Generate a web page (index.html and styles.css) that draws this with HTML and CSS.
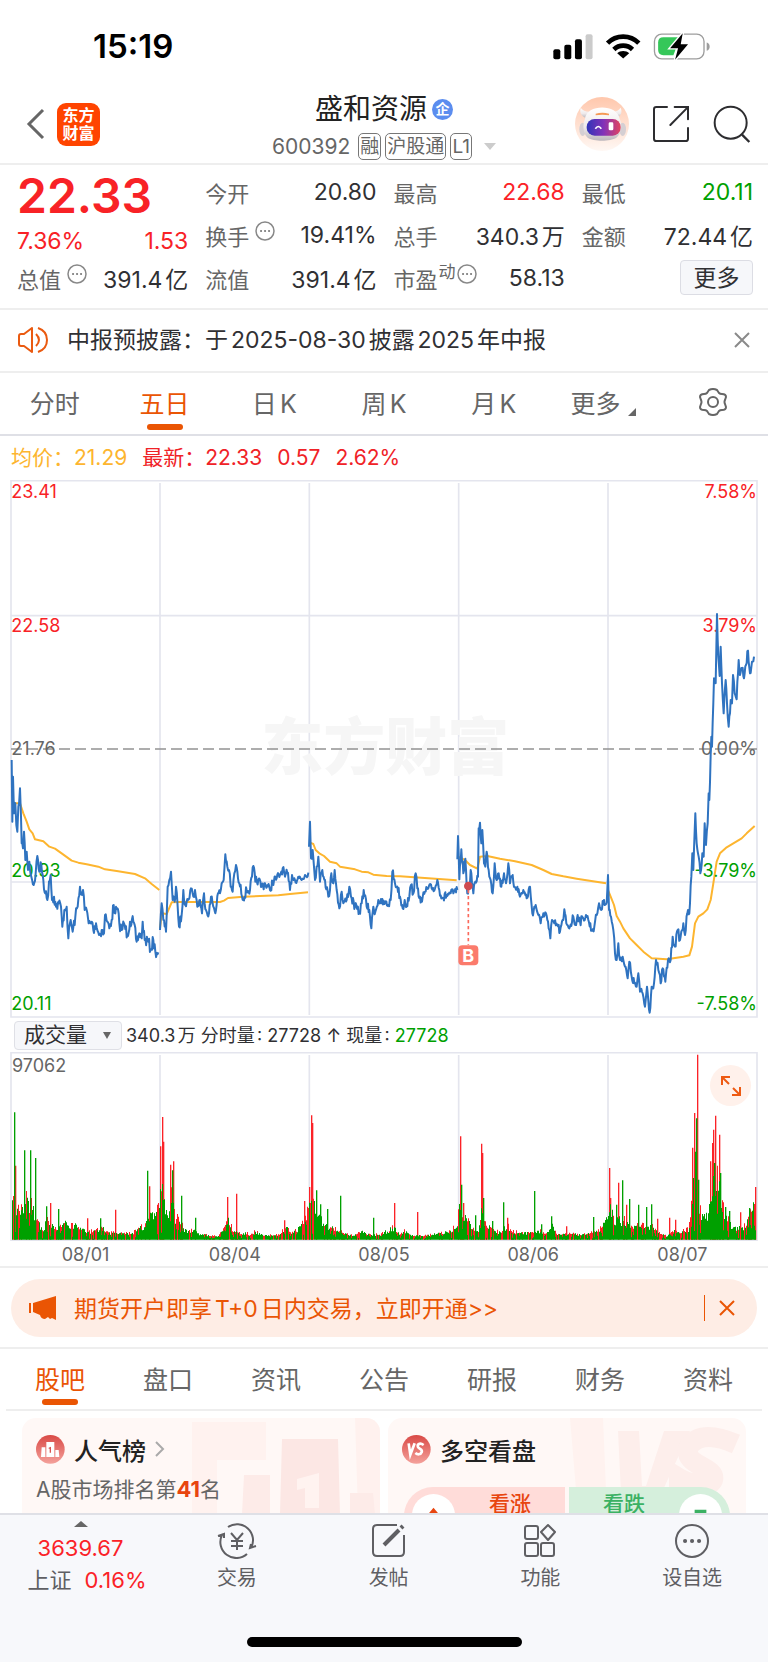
FILE: index.html
```html
<!DOCTYPE html>
<html lang="zh-CN">
<head>
<meta charset="utf-8">
<meta name="viewport" content="width=device-width, initial-scale=1">
<title>盛和资源 600392</title>
<link rel="stylesheet" href="styles.css">
</head>
<body>
<div class="app">
  <div class="status">
    <span class="status-time">15:19</span>
    <svg class="status-icons" viewBox="38 36 472 80" aria-hidden="true">
      <rect x="39" y="84" width="21" height="30" rx="6"/>
      <rect x="72" y="71" width="21" height="43" rx="6"/>
      <rect x="104" y="54" width="21" height="60" rx="6"/>
      <rect x="136" y="39" width="21" height="75" rx="6" fill="#cbcbcb"/>
      <path d="M202 66a66 66 0 0 1 94 0M221 85a40 40 0 0 1 56 0" fill="none" stroke="#000" stroke-width="14"/>
      <path d="M249 112l-18-16c9-9 27-9 36 0z"/>
      <rect x="343" y="39" width="149" height="74" rx="22" fill="#fff" stroke="#9d9d9d" stroke-width="4"/>
      <path d="M500 64c12 3 12 22 0 25z" fill="#9d9d9d"/>
      <path d="M370 48h50l-20 54h-30q-16 0-16-16V64q0-16 16-16z" fill="#35c759"/>
      <path d="M428 36l-38 45h24l-9 35 39-47h-22z" stroke="#fff" stroke-width="8" paint-order="stroke"/>
    </svg>
  </div>

  <header class="header">
    <div class="header-side">
      <button class="icon-btn" aria-label="返回"><svg width="20" height="32" viewBox="0 0 20 32"><path d="M18 2 4 16l14 14" fill="none" stroke="#666" stroke-width="3"/></svg></button>
      <a class="logo" href="#"><span>东方</span><span>财富</span></a>
    </div>
    <div class="header-mid">
      <h1 class="title">盛和资源<span class="badge">企</span></h1>
      <div class="code"><span class="code-num">600392</span><span class="tag">融</span><span class="tag">沪股通</span><span class="tag">L1</span><i class="caret"></i></div>
    </div>
    <div class="header-side header-right">
      <button class="icon-btn" aria-label="智能助手">
        <svg width="54" height="54" viewBox="0 0 162 162">
          <defs>
            <linearGradient id="halo" x2="0" y2="1"><stop stop-color="#ffc7ac"/><stop offset="1" stop-color="#fff8f4"/></linearGradient>
            <linearGradient id="visor"><stop stop-color="#3034b8"/><stop offset=".5" stop-color="#8332b8"/><stop offset="1" stop-color="#e24460"/></linearGradient>
            <linearGradient id="shell" x2="0" y2="1"><stop stop-color="#fff"/><stop offset=".6" stop-color="#eee9ea"/><stop offset="1" stop-color="#bdb8bd"/></linearGradient>
          </defs>
          <circle cx="81" cy="81" r="81" fill="url(#halo)"/>
          <path d="M17 32c-4 14 2 24 14 30l12-18c-12 0-20-4-26-12zM137 32c6 14 0 24-10 30l-14-18c12 0 18-4 24-12z" fill="url(#shell)"/>
          <ellipse cx="23" cy="97" rx="10" ry="20" fill="#d5cfd3"/><ellipse cx="143" cy="97" rx="10" ry="20" fill="#d5cfd3"/>
          <path d="M30 66c4-46 98-46 104 0 8 14 6 46-10 56-18 12-68 12-86 0-14-10-16-40-8-56z" fill="url(#shell)"/>
          <path d="M62 50q20-6 40 0v5q-20-4-40 0z" fill="#f59a57"/>
          <rect x="35" y="66" width="102" height="50" rx="24" fill="url(#visor)"/>
          <path d="M61 95q9-13 18 0" fill="none" stroke="#fff" stroke-width="5"/><rect x="101" y="76" width="14" height="24" rx="4" fill="#fff"/>
        </svg>
      </button>
      <button class="icon-btn" aria-label="分享"><svg width="38" height="38" viewBox="0 0 114 114"><path d="M45 6H13q-7 0-7 7v88q0 7 7 7h88q7 0 7-7V69M68 6h40v37M107 7 55 60" fill="none" stroke="#2d2d30" stroke-width="6" stroke-linecap="round"/></svg></button>
      <button class="icon-btn" aria-label="搜索"><svg width="38" height="38" viewBox="0 0 114 114"><circle cx="53" cy="53" r="48" fill="none" stroke="#2d2d30" stroke-width="6"/><path d="m87 89 22 22" stroke="#2d2d30" stroke-width="7"/></svg></button>
    </div>
  </header>

  <main class="main">
    <section class="quote">
      <div class="col">
        <strong class="price">22.33</strong>
        <div class="change"><span>7.36%</span><span>1.53</span></div>
        <div class="cell"><span class="label">总值<svg class="dots" viewBox="0 0 20 20"><use href="#dots"/></svg></span><span>391.4亿</span></div>
      </div>
      <div class="col">
        <div class="cell"><span class="label">今开</span><span>20.80</span></div>
        <div class="cell"><span class="label">换手<svg class="dots" viewBox="0 0 20 20"><use href="#dots"/></svg></span><span>19.41%</span></div>
        <div class="cell"><span class="label">流值</span><span>391.4亿</span></div>
      </div>
      <div class="col">
        <div class="cell"><span class="label">最高</span><span class="up">22.68</span></div>
        <div class="cell"><span class="label">总手</span><span>340.3万</span></div>
        <div class="cell"><span class="label">市盈<small class="sup">动</small><svg class="dots dots-tight" viewBox="0 0 20 20"><use href="#dots"/></svg></span><span>58.13</span></div>
      </div>
      <div class="col">
        <div class="cell"><span class="label">最低</span><span class="down">20.11</span></div>
        <div class="cell"><span class="label">金额</span><span>72.44亿</span></div>
        <div class="cell cell-end"><button class="more">更多</button></div>
      </div>
    </section>

    <section class="notice">
      <svg width="31" height="26" viewBox="0 0 31 26" fill="none" stroke="#ea5a10" stroke-width="2"><path d="M6 7 14 1v24l-8-6H3q-2 0-2-2V9q0-2 2-2zM18 7q6 6 0 12M20 1q9 3 9 12t-9 12" stroke-linejoin="round"/></svg>
      <span class="notice-text">中报预披露：于2025-08-30披露2025年中报</span>
      <button class="icon-btn" aria-label="关闭"><svg width="16" height="16" viewBox="0 0 16 16"><path d="m1 1 14 14M15 1 1 15" stroke="#8a8a8a" stroke-width="2"/></svg></button>
    </section>

    <nav class="tabs">
      <button class="tab">分时</button>
      <button class="tab active">五日</button>
      <button class="tab">日K</button>
      <button class="tab">周K</button>
      <button class="tab">月K</button>
      <button class="tab">更多<i class="corner"></i></button>
      <button class="tab" aria-label="设置"><svg width="30" height="28" viewBox="0 0 30 28" fill="none" stroke="#666" stroke-width="2"><path d="M11 2q4-2 8 0l2 3q1 1 3 1 4 0 4 3l-1 3q-1 2 0 4l1 3q0 3-4 3-2 0-3 1l-2 3q-4 2-8 0l-2-3q-1-1-3-1-4 0-4-3l1-3q1-2 0-4L2 9q0-3 4-3 2 0 3-1z" stroke-linejoin="round"/><circle cx="15" cy="14" r="5"/></svg></button>
    </nav>

    <div class="legend"><span class="avg">均价：21.29</span><span>最新：22.33</span><span>0.57</span><span>2.62%</span></div>

    <svg class="chart" viewBox="0 0 2304 1614" role="img" aria-label="五日价格走势">
      <g class="grid">
        <path d="M33 2H2271V1611H33zM480 9V1605M928 9V1605M1376 9V1605M1824 9V1605M33 407H2271M33 1206H2271"/>
      </g>
      <text class="watermark" x="1156" y="820">东方财富</text>
      <path class="mid" d="M33 807H2271"/>
      <path class="avg-line" id="avg"/>
      <g class="axis">
        <text class="t-up" x="34" y="53">23.41</text><text class="t-up" x="34" y="457">22.58</text>
        <text x="34" y="824">21.76</text><text class="t-down" x="34" y="1190">20.93</text><text class="t-down" x="34" y="1590">20.11</text>
        <g text-anchor="end"><text class="t-up" x="2271" y="53">7.58%</text><text class="t-up" x="2271" y="457">3.79%</text>
        <text x="2271" y="824">0.00%</text><text class="t-down" x="2271" y="1190">-3.79%</text><text class="t-down" x="2271" y="1590">-7.58%</text></g>
      </g>
      <path class="price-line" id="price"/>
      <path class="buy-line" d="M1405 1230V1394"/>
      <circle cx="1405" cy="1218" r="13" fill="#cf4b50"/>
      <rect x="1375" y="1396" width="60" height="60" rx="12" fill="#fb7b6c"/>
      <text class="buy" x="1405" y="1446">B</text>
    </svg>

    <div class="vol-head">
      <span class="picker"><select aria-label="指标"><option>成交量</option></select></span>
      <span class="vol-text">340.3万 分时量: 27728 ↑ 现量: <span class="down">27728</span></span>
    </div>

    <div class="vol-wrap">
      <svg class="chart" viewBox="0 125 2304 567" role="img" aria-label="成交量">
        <g class="grid"><path d="M33 127H2271V690H33zM480 134V690M928 134V690M1376 134V690M1824 134V690"/></g>
        <g class="axis"><text x="36" y="186">97062</text></g>
        <path id="volRed" fill="#fb2227"/><path id="volGreen" fill="#00a000"/>
      </svg>
      <button class="expand" aria-label="全屏"><svg width="22" height="22" viewBox="0 0 22 22" fill="none" stroke="#ee5a12" stroke-width="2"><path d="M2 10V2h8M2 2l7 7M20 12v8h-8M20 20l-7-7"/></svg></button>
      <div class="dates"><span>08/01</span><span>08/04</span><span>08/05</span><span>08/06</span><span>08/07</span></div>
    </div>

    <div class="promo-row">
      <div class="promo">
        <svg width="28" height="24" viewBox="0 0 28 24" fill="#ea5504"><path d="M0 7h2v10H0zM4 7 27 0v24l-4-2-2 1-2-2-3 2q-4 0-5-4l-7-3z"/></svg>
        <a href="#">期货开户即享T+0日内交易，立即开通&gt;&gt;</a>
        <button class="icon-btn" aria-label="关闭"><svg width="16" height="16" viewBox="0 0 16 16"><path d="m1 1 14 14M15 1 1 15" stroke="#ea5504" stroke-width="2"/></svg></button>
      </div>
    </div>

    <nav class="tabs tabs-info">
      <button class="tab active">股吧</button><button class="tab">盘口</button><button class="tab">资讯</button><button class="tab">公告</button><button class="tab">研报</button><button class="tab">财务</button><button class="tab">资料</button>
    </nav>

    <section class="cards">
      <article class="card">
        <svg class="card-art" viewBox="0 0 190 96"><path d="M2 4h74v38H27v54H2z" fill="#fff2ef"/><path d="M165 0h25v96h-22z" fill="#fff1ee"/><path d="M54 57h26v39H52z" fill="#fdebe8"/><path d="M92 21h56l2 75H90z" fill="#fce7e4"/><path d="M160 75h23l2 21h-25z" fill="#fdebe8"/><path d="m107 61 22-6v35h-14V70l-8 2z" fill="#fff3f0"/></svg>
        <h2 class="card-title"><svg width="29" height="29" viewBox="0 0 87 87"><defs><linearGradient id="red" x2="0" y2="1"><stop stop-color="#d94a46"/><stop offset="1" stop-color="#f4a19b"/></linearGradient></defs><circle cx="43" cy="43" r="43" fill="url(#red)"/><path d="M17 37h11v29H15zM31 21h24v45H31zM58 45h10l2 21H58z" fill="#fff"/><path d="m38 38 7-3v18h-4V41h-3z" fill="#d95450"/></svg>人气榜<svg width="10" height="16" viewBox="0 0 10 16"><path d="m1 1 7 7-7 7" fill="none" stroke="#aaa" stroke-width="2"/></svg></h2>
        <p class="rank">A股市场排名第<b>41</b>名</p>
      </article>
      <article class="card">
        <svg class="card-art" viewBox="0 0 190 96"><path d="M14 0h33l4 96H22z" fill="#fff2ef"/><path d="M62 13h21l3 55h4l18-55h26l-38 83H66z" fill="#fdeeeb"/><path d="M180 26q-34-15-47 2c-8 20 28 20 24 34-3 8-24 4-34-2v28" fill="none" stroke="#fdeeeb" stroke-width="20"/></svg>
        <h2 class="card-title"><svg width="29" height="29" viewBox="0 0 87 87"><circle cx="43" cy="43" r="43" fill="url(#red)"/><path d="M20 25l5 34 13-34M65 30c-12-8-20-2-17 6 3 7 15 6 11 16-3 8-13 7-19 2" fill="none" stroke="#fff" stroke-width="8"/></svg>多空看盘</h2>
        <div class="vote">
          <button class="vote-up"><svg class="vote-dot" viewBox="0 0 44 44"><circle cx="22" cy="22" r="22" fill="#fff"/><path d="m22 14 10 12H12z" fill="#e8450f"/></svg>看涨</button>
          <button class="vote-down">看跌<svg class="vote-dot" viewBox="0 0 44 44"><circle cx="22" cy="22" r="22" fill="#fff"/><path d="M16 16h12v8H16z" fill="#3bb163"/></svg></button>
        </div>
      </article>
    </section>
  </main>

  <footer class="bottom">
    <div class="bottom-row">
      <a class="index" href="#"><i class="tri"></i><span class="up">3639.67</span><span class="index-row"><span>上证</span><span class="up">0.16%</span></span></a>
      <a class="item" href="#"><svg viewBox="0 0 40 36"><path d="M11 4a16 16 0 0 1 23 21M30 31A16 16 0 0 1 5 12M1 13l6-2v4M39 23l-6 2 1-4M14 10l6 7 6-7M20 17v10M14 18h12M14 23h12"/></svg>交易</a>
      <a class="item" href="#"><svg viewBox="0 0 40 36"><path d="M28 2H8q-4 0-4 4v23q0 4 4 4h23q4 0 4-4V12"/><path d="M15 22 30 7" stroke-width="4"/><path d="m32 5 2-2" stroke-width="4"/></svg>发帖</a>
      <a class="item" href="#"><svg viewBox="0 0 40 36"><rect x="5" y="3" width="13" height="13" rx="2"/><rect x="5" y="20" width="13" height="13" rx="2"/><rect x="21" y="20" width="13" height="13" rx="2"/><path d="m28 2 7 7-7 8-7-8z" stroke-linejoin="round"/></svg>功能</a>
      <a class="item" href="#"><svg viewBox="0 0 40 36"><circle cx="20" cy="18" r="16"/><path d="M13 18h.1M20 18h.1M27 18h.1" stroke-width="4" stroke-linecap="round"/></svg>设自选</a>
    </div>
    <div class="home"></div>
  </footer>
</div>
<svg class="defs" aria-hidden="true"><symbol id="dots" viewBox="0 0 20 20"><circle cx="10" cy="10" r="9" fill="none" stroke="#888" stroke-width="1.500"/><path d="M6 10h.1M10 10h.1M14 10h.1" stroke="#777" stroke-width="2" stroke-linecap="round"/></symbol></svg>
<script src="chart.js"></script>
</body>
</html>
```
FILE: styles.css
```css
* { box-sizing: border-box; }
body { margin: 0; background: #fff; color: #303033; font-family: Inter, "Noto Sans CJK SC", sans-serif; font-size: 22px; text-autospace: normal; }
button, select { font: inherit; color: inherit; background: none; border: 0; padding: 0; margin: 0; }
a { color: inherit; text-decoration: none; }
h1, h2, p { margin: 0; font-weight: 400; }
svg { display: block; flex: none; }
.defs { position: absolute; width: 0; height: 0; }
.up { color: #fb2227; }
.down { color: #00a000; }

.app { display: flex; flex-direction: column; height: 100vh; overflow: hidden; }
.main { flex: 1; min-height: 0; overflow: hidden; }

.status { display: flex; justify-content: space-between; align-items: center; height: 92px; padding: 0 58px 0 93px; color: #000; flex: none; }
.status-time { font-size: 33px; font-weight: 600; }
.status-icons { width: 157px; height: 27px; }

.header { display: grid; grid-template-columns: 1fr auto 1fr; height: 73px; border-bottom: 2px solid #eee; flex: none; }
.header-side { display: flex; align-items: center; gap: 12px; height: 64px; padding-left: 25px; }
.header-right { justify-content: flex-end; gap: 23px; padding: 0 17px 0 0; }
.icon-btn { display: block; flex: none; }
.logo { display: flex; flex-direction: column; align-items: center; justify-content: center; width: 43px; height: 43px; border-radius: 9px; background: #ff4400; color: #fff; font-size: 16px; font-weight: 700; line-height: 18px; }
.title { display: flex; align-items: center; justify-content: center; gap: 5px; font-size: 28px; line-height: 34px; color: #222; }
.badge { width: 21px; height: 21px; border-radius: 50%; background: #5b8def; color: #fff; font-size: 14px; line-height: 20px; font-weight: 700; text-align: center; }
.code { display: flex; align-items: center; gap: 4px; height: 40px; color: #666; font-size: 21px; }
.code-num { margin-right: 4px; }
.tag { border: 1px solid #777; border-radius: 5px; padding: 0 1px; font-size: 19px; line-height: 25px; }
.caret { border: 6px solid transparent; border-top: 7px solid #ccc; border-bottom: 0; margin-left: 8px; }

.quote { display: grid; grid-template-columns: repeat(4, 1fr); gap: 17px; padding: 5px 15px 9px 17px; border-bottom: 2px solid #eee; font-size: 23px; }
.price { display: block; height: 52px; line-height: 52px; font-size: 48px; font-weight: 600; color: #f82226; }
.change { display: flex; justify-content: space-between; align-items: center; height: 34px; line-height: 34px; padding-top: 4px; color: #f82226; }
.cell { display: flex; justify-content: space-between; align-items: center; height: 43px; white-space: nowrap; }
.cell-end { justify-content: flex-end; }
.label { display: flex; align-items: center; color: #666; font-size: 22px; }
.dots { width: 20px; height: 20px; margin: 0 0 7px 6px; }
.dots-tight { margin-left: 1px; }
.sup { font-size: 17px; line-height: 20px; margin: 0 0 12px 1px; }
.more { width: 73px; height: 35px; border: 1px solid #dcdde4; border-radius: 4px; background: #f6f7fa; line-height: 30px; }

.notice { display: flex; align-items: center; height: 63px; padding: 0 18px 2px; border-bottom: 2px solid #eee; }
.notice-text { flex: 1; margin-left: 18px; padding-bottom: 3px; font-size: 23px; }

.tabs { display: flex; height: 63px; border-bottom: 2px solid #dfe0e6; color: #666; font-size: 25px; }
.tab { position: relative; flex: 1; display: flex; align-items: center; justify-content: center; padding-bottom: 3px; }
.active { color: #ea5504; }
.active::after { content: ""; position: absolute; left: 50%; bottom: 4px; width: 36px; height: 6px; margin-left: -18px; border-radius: 3px; background: #ea5504; }
.corner { align-self: flex-end; margin: 0 0 15px 8px; border: 4px solid #666; border-left-color: transparent; border-top-color: transparent; }
.tabs-info { margin: 0 6px; height: 62px; border-color: #eee; }

.legend { display: flex; gap: 12px; padding: 0 11px; height: 44px; line-height: 44px; font-size: 21px; font-family: Roboto, "Noto Sans CJK SC", sans-serif; font-family: Inter, "Noto Sans CJK SC", sans-serif; color: #f02227; }
.legend span + span + span { margin-left: 3px; }
.avg { color: #fdb52f; }
.legend .avg { margin-right: 3px; }

.chart { width: 100%; height: auto; }
.grid path { fill: none; stroke: #e4e5ee; stroke-width: 5; }
.watermark { font-size: 186px; font-weight: 900; fill: #f6f6f6; text-anchor: middle; dominant-baseline: middle; }
.mid { stroke: #929292; stroke-width: 5; stroke-dasharray: 33 15; }
.axis { font-size: 54px; fill: #666; }
.t-up { fill: #f82226; }
.t-down { fill: #00a000; }
.price-line, .avg-line { fill: none; stroke: #2f73c0; stroke-width: 6; stroke-linejoin: round; }
.avg-line { stroke: #fdb52f; }
.buy-line { stroke: #fb6a5c; stroke-width: 5; stroke-dasharray: 10 8; }
.buy { font-size: 54px; font-weight: 700; fill: #fff; text-anchor: middle; }

.vol-head { display: flex; align-items: center; gap: 4px; height: 34px; padding-left: 14px; font-size: 18px; }
.vol-text { padding-bottom: 3px; white-space: nowrap; }
.picker { position: relative; }
.picker select { display: block; appearance: none; width: 108px; height: 29px; padding: 0 0 2px 9px; border: 1px solid #dfe0e6; border-radius: 4px; background: #f6f7fa; font-size: 21px; line-height: 25px; }
.picker::after { content: ""; position: absolute; right: 11px; top: 11px; border: 4px solid transparent; border-top: 7px solid #666; border-bottom: 0; }
.vol-wrap { position: relative; border-bottom: 2px solid #eee; }
.expand { position: absolute; right: 17px; top: 13px; width: 41px; height: 41px; border-radius: 50%; background: #fff1eb; display: grid; place-items: center; }
.dates { display: flex; padding: 0 11px; height: 25px; line-height: 27px; font-size: 18px; color: #666; }
.dates span { flex: 1; text-align: center; }

.promo-row { padding: 11px 11px 10px; border-bottom: 2px solid #eee; }
.promo { display: flex; align-items: center; height: 58px; padding: 0 22px 0 18px; border-radius: 29px; background: #feede5; color: #ea5504; font-size: 23px; }
.promo a { flex: 1; margin-left: 17px; padding-bottom: 3px; }
.promo .icon-btn { border-left: 1px solid #ea5504; padding: 5px 0 5px 14px; }

.cards { display: grid; grid-template-columns: 1fr 1fr; gap: 8px; padding: 7px 22px; }
.card { position: relative; height: 150px; padding: 14px 14px 0; border-radius: 14px; background: #fff8f6; overflow: hidden; }
.card-art { position: absolute; right: 0; top: 0; width: 190px; height: 96px; }
.card-title { position: relative; display: flex; align-items: center; gap: 9px; height: 34px; font-size: 24px; font-weight: 500; color: #222; }
.rank { position: relative; margin-top: 8px; font-size: 21px; line-height: 30px; color: #666; text-autospace: no-autospace; }
.rank b { color: #e8450f; font-size: 22px; }
.vote { position: relative; display: flex; gap: 4px; margin: 21px 2px 0; }
.vote button { display: flex; align-items: flex-start; flex: 1; height: 58px; padding: 7px 8px 0; font-size: 21px; font-weight: 500; line-height: 20px; }
.vote-up { background: #ffdcd9; color: #e8450f; border-radius: 29px 0 0 29px; gap: 34px; }
.vote-down { background: #d5efdc; color: #3bb163; border-radius: 0 29px 29px 0; justify-content: flex-end; gap: 34px; }
.vote-dot { width: 43px; height: 43px; }

.bottom { flex: none; height: 149px; border-top: 2px solid #dfe0e6; background: #f7f8fb; color: #5f5f63; }
.bottom-row { display: flex; height: 122px; }
.index { width: 161px; display: flex; flex-direction: column; align-items: center; padding-top: 6px; line-height: 32px; }
.tri { border: 7px solid transparent; border-bottom: 6px solid #666; border-top: 0; margin-bottom: 5px; }
.index-row { display: flex; gap: 13px; padding-left: 13px; }
.item { flex: 1; display: flex; flex-direction: column; align-items: center; padding-top: 8px; font-size: 20px; line-height: 34px; gap: 2px; }
.item svg { width: 40px; height: 36px; fill: none; stroke: #5f5f63; stroke-width: 2; }
.home { width: 275px; max-width: 60%; height: 10px; margin: 0 auto; border-radius: 5px; background: #000; }
```
FILE: chart.js
```js
// Three drawing units make one CSS pixel in both charts.
let seed = 7;
function rand() {
  seed = (seed * 16807) % 2147483647;
  return seed / 2147483647;
}

function parse(text, dx, dy) {
  return text.trim().split(/\s+/).map(function (p) {
    const xy = p.split(",").map(Number);
    return [xy[0] + dx, xy[1] + dy];
  });
}

function line(points, jitter) {
  const out = [points[0]];
  for (let i = 1; i < points.length; i++) {
    const a = points[i - 1], b = points[i];
    const n = jitter ? Math.floor((b[0] - a[0]) / 2) : 1;
    for (let k = 1; k < n; k++) {
      const t = k / n;
      out.push([a[0] + (b[0] - a[0]) * t, a[1] + (b[1] - a[1]) * t + (rand() - 0.5) * jitter]);
    }
    out.push(b);
  }
  return "M" + out.map(function (p) { return p[0].toFixed(1) + " " + p[1].toFixed(1); }).join("L");
}

const d1 = parse("35,60 37,245 39,110 42,220 46,190 49,255 52,275 55,200 60,145 63,230 65,310 69,325 72,275 76,360 80,335 84,390 88,365 94,410 101,435 107,400 112,348 118,395 124,375 130,420 136,460 142,480 147,425 152,405 156,480 162,470 168,500 176,490 183,500 187,560 193,510 200,500 205,595 212,540 218,575 226,530 233,500 240,440 246,465 249,450 254,510 260,510 266,550 275,545 280,570 288,550 297,585 305,570 312,580 315,525 322,545 328,565 335,540 341,495 346,520 352,505 358,550 365,570 372,550 382,585 390,545 400,545 410,605 418,580 425,595 428,545 434,600 445,605 452,630 460,600 466,635 475,637", 0, 780);
const d2 = parse("480,570 485,490 490,540 498,575 503,440 508,420 513,395 518,480 524,485 528,440 533,500 537,560 545,525 550,450 556,495 564,480 573,445 580,470 585,450 592,500 600,480 606,520 612,460 618,510 627,520 633,470 640,500 648,510 654,460 660,460 665,430 671,420 676,343 682,380 687,390 692,440 698,455 703,400 708,375 714,415 720,440 730,475 740,450 750,450 756,410 760,378 766,425 775,420 785,440 795,430 810,450 818,425 830,415 840,405 848,385 855,410 862,400 870,450 876,405 885,420 895,410 905,420 915,405 925,398", 0, 780);
const d3 = parse("927,320 930,245 933,355 938,330 945,420 950,380 955,350 960,425 967,390 975,420 985,470 990,450 994,400 1000,430 1004,390 1010,450 1018,505 1025,455 1030,490 1040,480 1048,440 1055,475 1065,500 1078,520 1085,490 1091,450 1100,500 1108,510 1114,565 1120,500 1126,515 1135,480 1145,490 1155,490 1165,495 1172,480 1177,395 1185,430 1192,440", 0, 780)
  .concat(parse("0,890 8,925 14,900 20,915 28,890 33,855 40,880 47,820 52,865 60,890 66,905 75,875 85,865 95,865 105,865 112,840 118,870 130,895 140,885 150,880 160,880 172,870", 1200, 360));
const d4 = parse("172,778 174,708 178,838 184,748 190,820 196,776 202,880 208,860 212,810 220,880 226,845 234,830 236,685 240,668 244,730 247,690 252,790 256,800 260,755 266,810 272,840 278,880 284,790 290,840 296,820 304,860 312,820 318,850 325,790 330,850 336,830 344,860 352,860 360,890 370,870 380,895 390,860 397,940 407,915 415,945 422,970 430,940 438,940 446,985 451,1015 456,960 463,970 472,975 480,995 490,960 493,928 499,970 510,980 520,950 526,975 533,945 540,965 550,955 558,945 565,960 575,990 583,980 590,945 597,910 604,930 612,900 620,910", 1200, 360);
const d5 = parse("620,910 624,825 627,930 633,950 640,990 645,1060 650,1080 655,1030 660,1080 668,1070 675,1100 683,1135 688,1085 695,1130 703,1150 710,1160 715,1120 720,1175 728,1180 735,1220 741,1160 749,1238 755,1160 762,1150 768,1080 775,1110 782,1150 788,1105 796,1145 804,1080 812,1080 818,1010 825,1040 833,990 840,1020 850,970 855,1005 862,940 868,940 874,830 877,760 880,810 886,640 890,730 896,770 901,820 907,760 911,770 914,670 918,735 923,670 926,580 928,600 934,410 936,440 942,235 947,250 951,42 955,170 959,228 962,140 966,250 971,340 977,240 981,310 986,380 992,300 996,310 999,225 1004,280 1010,298 1016,180 1020,225 1026,205 1032,235 1038,195 1044,152 1050,220 1056,185 1062,170", 1200, 360);
document.getElementById("price").setAttribute("d", line(d1, 34) + line(d2, 28) + line(d3, 28) + line(d4, 26) + line(d5, 26));

const a1 = parse("45,190 60,190 70,220 80,245 88,268 98,280 105,298 130,304 148,320 165,326 185,340 215,362 235,368 260,373 295,380 315,388 350,393 405,402 435,415 455,432 478,450", 0, 780);
const a2 = parse("480,565 485,520 500,522 515,487 540,486 660,486 672,482 684,474 730,470 835,466 870,462 924,457", 0, 780);
const a3 = parse("930,308 940,312 947,330 958,340 972,348 990,365 1010,370 1020,380 1065,388 1085,395 1105,397 1120,404 1160,408 1200,409 1370,421", 0, 780);
const a4 = parse("174,770 195,780 210,795 232,806 240,770 262,768 300,776 345,784 395,795 430,810 455,822 490,829 530,836 618,850", 1200, 360);
const a5 = parse("624,870 632,890 642,915 650,948 660,965 670,985 690,1015 710,1035 730,1055 755,1075 800,1078 850,1070 868,1066 876,1040 885,970 895,950 910,940 922,928 932,900 940,850 950,785 960,760 980,742 1000,730 1025,715 1040,700 1064,678", 1200, 360);
document.getElementById("avg").setAttribute("d", [a1, a2, a3, a4, a5].map(function (a) { return line(a, 0); }).join(""));

// Typical volume along the axis, then the single minutes that stand out.
const level = parse("35,180 45,110 60,90 70,120 80,140 95,110 110,80 118,50 130,30 138,70 150,60 160,45 175,40 195,55 215,55 240,40 255,25 280,25 300,40 310,35 330,20 360,18 400,20 415,45 430,45 450,80 465,110 475,130 483,200 492,120 505,100 515,160 525,80 540,55 555,30 580,30 600,15 650,8 670,30 682,70 695,35 720,15 735,22 750,12 766,25 790,10 840,15 853,45 870,25 890,30 905,50 920,80 930,150 940,130 950,100 970,50 990,45 1010,30 1030,20 1060,10 1085,25 1110,12 1135,15", 0, 0)
  .concat(parse("0,15 40,40 60,15 70,30 90,12 130,10 170,18 210,25 230,50 240,140 250,80 265,60 280,30 295,25 304,100 315,60 330,40 360,20 380,50 395,25 420,20 450,20 480,25 500,20 515,60 530,15 560,18 600,15 640,20 660,35 680,70 690,120 700,70 715,70 735,60 760,40 790,45 815,45 840,15 860,10 880,30 900,20 925,35 935,170 943,280 950,250 957,110 970,80 985,100 993,180 1002,240 1015,200 1025,110 1040,70 1060,35 1090,45 1110,80 1129,150", 1140, 0));
const redPeaks = parse("44,222 149,110 262,64 345,90 446,160 480,280 486,368 490,294 511,225 518,235 681,128 708,138 853,58 913,116 927,158 933,373 936,350 1183,110 1251,83 1379,310 1389,110 1443,288 1446,260 1522,66 1698,40 1826,215 1829,125 1854,171 1879,105 1970,63 2008,66 2026,60 2076,276 2082,380 2091,555 2130,235 2137,290 2139,330 2146,372 2156,315 2221,82 2266,158", 0, 0);
const greenPeaks = parse("41,382 71,268 90,268 106,245 139,100 175,92 301,64 442,207 515,208 542,132 586,66 948,148 961,106 980,92 1020,132 1119,66 1382,165 1425,73 1449,125 1476,56 1509,112 1602,146 1622,46 1652,70 1779,68 1849,105 1867,178 1887,122 1915,105 1937,98 1952,106 2088,364 2095,180 2141,230 2159,200 2176,98 2188,86 2247,95", 0, 0);

function bar(x, h, w) {
  return "M" + x + " 688v" + -Math.round(h) + "h" + w + "v" + Math.round(h) + "z";
}
let red = "", green = "", at = 0;
for (let x = 36; x < 2268; x += 3) {
  while (at < level.length - 2 && level[at + 1][0] < x) at++;
  const a = level[at], b = level[at + 1];
  const base = a[1] + (b[1] - a[1]) * (x - a[0]) / (b[0] - a[0]);
  const h = base * (0.6 + 0.5 * rand()) + 4;
  if (rand() < 0.42) {
    red += bar(x, h, 3);
    green += bar(x, h * (rand() < 0.35 ? 0 : 0.75 * rand() + 0.1), 3);
  } else {
    green += bar(x, h * 0.9, 3);
  }
}
function snap(x) { return Math.round(x / 3) * 3; }
redPeaks.forEach(function (p) { red += bar(snap(p[0]), p[1], 4); });
greenPeaks.forEach(function (p) { green += bar(snap(p[0]), p[1], 4); });
document.getElementById("volRed").setAttribute("d", red);
document.getElementById("volGreen").setAttribute("d", green);
```
